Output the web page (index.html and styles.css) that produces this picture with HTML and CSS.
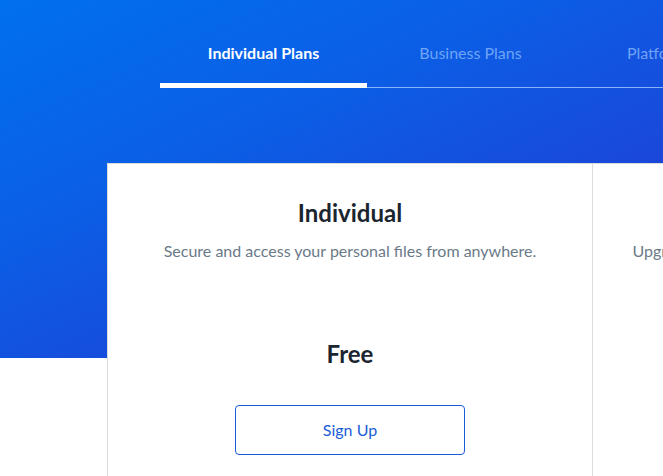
FILE: index.html
```html
<!DOCTYPE html>
<html lang="en">
<head>
<meta charset="utf-8">
<title>Plans</title>
<link rel="stylesheet" href="styles.css">
</head>
<body>
<header class="hero">
  <nav class="tabs">
    <a class="tab active">Individual Plans</a>
    <a class="tab">Business Plans</a>
    <a class="tab">Platform Plans</a>
  </nav>
</header>
<main class="cards">
  <section class="card">
    <h2 class="card-title">Individual</h2>
    <p class="card-desc">Secure and access your personal files from anywhere.</p>
    <div class="price">Free</div>
    <a class="btn">Sign Up</a>
  </section>
  <section class="card">
    <h2 class="card-title">Personal Pro</h2>
    <p class="card-desc">Upgrade to get more space and powerful sharing features.</p>
    <div class="price">$10</div>
    <a class="btn">Buy Now</a>
  </section>
</main>
</body>
</html>
```

FILE: styles.css
```css
* { box-sizing: border-box; }
html, body { margin: 0; padding: 0; }
body {
  width: 663px;
  height: 476px;
  overflow: hidden;
  background: #fff;
  font-family: Lato, "Open Sans", Arial, sans-serif;
}
.hero {
  height: 358px;
  background: linear-gradient(155deg, #0070ef 0%, #0b5fe6 35%, #1a47da 70%, #1e3fd5 100%);
  padding-top: 20px;
  padding-left: 160px;
}
.tabs {
  display: flex;
  width: 700px;
  height: 68px;
}
.tab {
  flex: 0 0 207px;
  display: flex;
  align-items: center;
  justify-content: center;
  padding-bottom: 2px;
  font-size: 16px;
  color: rgba(150, 195, 255, 0.72);
  border-bottom: 1px solid rgba(150, 190, 255, 0.9);
  white-space: nowrap;
}
.tab.active {
  color: #fff;
  font-weight: 700;
  border-bottom-color: #fff;
  box-shadow: inset 0 -4px 0 #fff;
}
.cards {
  display: flex;
  margin-top: -195px;
  margin-left: 107px;
  width: 1000px;
}
.card {
  flex: 0 0 486px;
  height: 400px;
  background: #fff;
  border: 1px solid #dcdcdc;
  display: flex;
  flex-direction: column;
  align-items: center;
  padding-top: 35px;
}
.card + .card { border-left: 0; }
.card-title {
  margin: 0;
  font-size: 24px;
  line-height: 28px;
  font-weight: 700;
  color: #1b252f;
  white-space: nowrap;
}
.card-desc {
  margin: 14px 0 0;
  font-size: 16px;
  line-height: 20px;
  color: #6a7a88;
  white-space: nowrap;
}
.price {
  margin-top: 79px;
  font-size: 24px;
  line-height: 28px;
  font-weight: 700;
  color: #1b252f;
}
.btn {
  margin-top: 37px;
  width: 230px;
  height: 50px;
  padding-bottom: 2px;
  border: 1px solid #1a5cd8;
  border-radius: 4px;
  display: flex;
  align-items: center;
  justify-content: center;
  font-size: 16px;
  color: #1a5cd8;
}
```
